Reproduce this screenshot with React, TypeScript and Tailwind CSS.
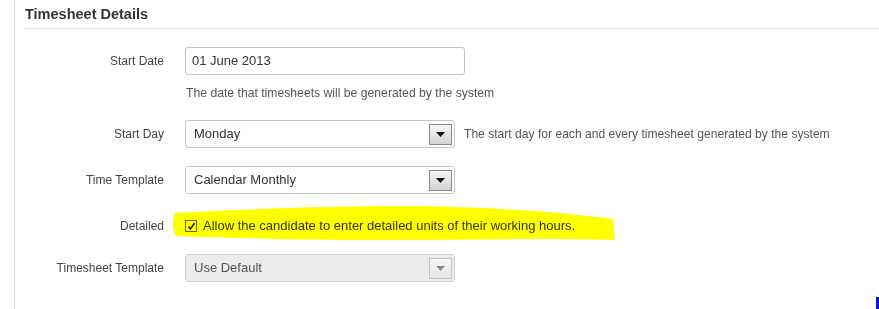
import React from 'react';

const SelectArrow = ({ disabled = false }: { disabled?: boolean }) => (
  <span
    className={`flex h-[21px] w-[23px] items-center justify-center border ${
      disabled
        ? 'border-[#c4c4c4] bg-gradient-to-b from-[#f7f7f7] to-[#e6e6e6]'
        : 'border-[#8a8a8a] bg-gradient-to-b from-[#f6f6f6] to-[#d4d4d4]'
    }`}
  >
    <svg width="9" height="5" viewBox="0 0 9 5">
      <path d="M0 0 L9 0 L4.5 5 Z" fill={disabled ? '#8a8a8a' : '#111'} />
    </svg>
  </span>
);

const FakeSelect = ({ value, disabled = false }: { value: string; disabled?: boolean }) => (
  <div
    className={`flex h-[28px] w-[270px] items-center justify-between rounded-[3px] border pl-[8px] pr-[2px] text-[13px] ${
      disabled ? 'border-[#d0d0d0] bg-[#ececec] text-[#555]' : 'border-[#c6c6c6] bg-white text-[#333]'
    }`}
  >
    <span>{value}</span>
    <SelectArrow disabled={disabled} />
  </div>
);

const Row = ({ label, children, className = '' }: { label: string; children: React.ReactNode; className?: string }) => (
  <div className={`flex items-center ${className}`}>
    <div className="w-[139px] shrink-0 text-right text-[12px] text-[#444]">{label}</div>
    <div className="ml-[21px] flex items-center">{children}</div>
  </div>
);

export default function App() {
  return (
    <div className="relative h-[309px] w-[879px] overflow-hidden bg-white font-['Liberation_Sans',Arial,sans-serif]">
      <div className="ml-[14px] h-full border-l border-[#dadada] pl-[10px]">
        <h2 className="h-[29px] border-b border-[#e3e3e3] pt-[6px] text-[14.5px] font-bold leading-[17px] text-[#333]">
          Timesheet Details
        </h2>

        <Row label="Start Date" className="mt-[18px]">
          <div className="flex h-[28px] w-[280px] items-center rounded-[3px] border border-[#c6c6c6] pl-[6px] text-[13px] text-[#333]">
            01 June 2013
          </div>
        </Row>
        <div className="ml-[161px] mt-[10px] text-[12.2px] leading-[16px] text-[#555]">
          The date that timesheets will be generated by the system
        </div>

        <Row label="Start Day" className="mt-[19px]">
          <FakeSelect value="Monday" />
          <span className="ml-[9px] text-[12.1px] text-[#555]">
            The start day for each and every timesheet generated by the system
          </span>
        </Row>

        <Row label="Time Template" className="mt-[18px]">
          <FakeSelect value="Calendar Monthly" />
        </Row>

        <Row label="Detailed" className="mt-[22px] h-[20px]">
          <span className="flex h-[12px] w-[12px] items-center justify-center border border-[#666] bg-white">
            <svg width="9" height="9" viewBox="0 0 9 9">
              <path d="M1.5 4.5 L3.5 7 L7.5 1" fill="none" stroke="#222" strokeWidth="1.6" />
            </svg>
          </span>
          <span className="ml-[6px] text-[13px] text-[#333]">
            Allow the candidate to enter detailed units of their working hours.
          </span>
        </Row>

        <Row label="Timesheet Template" className="mt-[18px]">
          <FakeSelect value="Use Default" disabled />
        </Row>
      </div>

      {/* highlighter stroke over the Detailed row */}
      <svg
        className="pointer-events-none absolute left-0 top-0 mix-blend-multiply"
        width="879"
        height="309"
        viewBox="0 0 879 309"
      >
        <path
          d="M175 213 C250 209 330 206 400 206 C480 206 560 212 613 219 L615 240 C540 238 460 240 380 240 C300 240 230 238 176 236 C172 230 172 220 175 213 Z"
          fill="#ffff00"
        />
      </svg>

      <div className="absolute left-[876px] top-[297px] h-[12px] w-[3px] bg-[#1010e0]" />
    </div>
  );
}
